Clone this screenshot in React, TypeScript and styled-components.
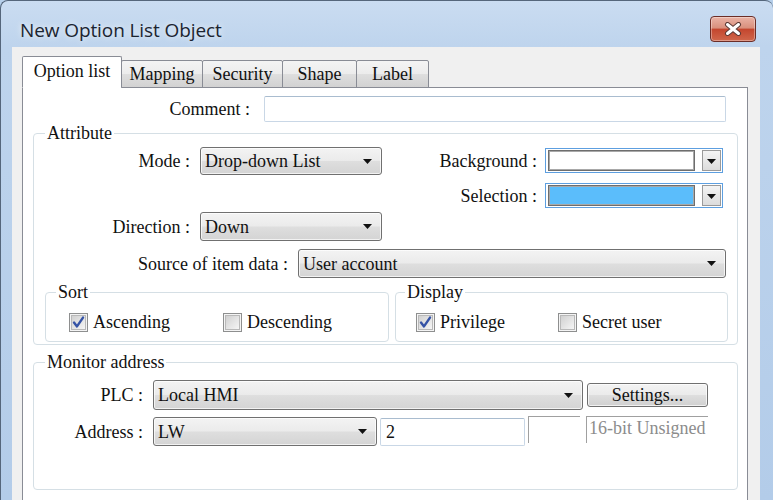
import React from 'react';
import styled, { createGlobalStyle } from 'styled-components';

const Global = createGlobalStyle`
  html, body { margin: 0; padding: 0; width: 773px; height: 500px; overflow: hidden; background: #b6cfea; }
  #root { width: 773px; height: 500px; }
`;

const SERIF = `"Liberation Serif", "Times New Roman", serif`;
const FS = 18;

const Window = styled.div`
  box-sizing: border-box;
  width: 773px;
  height: 500px;
  display: flex;
  flex-direction: column;
  background: linear-gradient(180deg, #cadcf1 0px, #bed4ed 46px, #b3cce9 100%);
  border-top: 1px solid #55667b;
  border-left: 1px solid #55667b;
  border-top-left-radius: 8px;
  border-top-right-radius: 8px;
  overflow: hidden;
`;

const TitleBar = styled.div`
  height: 46px;
  flex: none;
  display: flex;
  align-items: flex-start;
  padding-left: 19px;
`;

const Title = styled.div`
  margin-top: 16px;
  font-family: "Open Sans", "Noto Sans", sans-serif;
  font-size: 19px;
  line-height: 26px;
  color: #1b2430;
  text-shadow: 0 0 6px rgba(255, 255, 255, 0.9);
  letter-spacing: -0.1px;
`;

const CloseButton = styled.div`
  box-sizing: border-box;
  margin: 15px 17px 0 auto;
  width: 46px;
  height: 26px;
  border: 1px solid #6b2d27;
  border-radius: 4px;
  background: linear-gradient(180deg, #eab3a6 0%, #d9907d 45%, #c4472f 52%, #d0674c 100%);
  box-shadow: inset 0 0 0 1px rgba(255, 255, 255, 0.35);
  display: flex;
  align-items: center;
  justify-content: center;
`;

const Body = styled.div`
  flex: 1;
  display: flex;
  flex-direction: column;
  margin: 0 13px 0 11px;
  padding: 10px 12px 0 10px;
  background: #f0f0f0;
  min-height: 0;
`;

const TabStrip = styled.div`
  display: flex;
  align-items: flex-end;
  height: 31px;
  flex: none;
  margin-bottom: -1px;
  position: relative;
  z-index: 1;
`;

const Tab = styled.div<{ $active?: boolean; $w: number }>`
  box-sizing: border-box;
  width: ${(p) => p.$w}px;
  height: ${(p) => (p.$active ? 32 : 28)}px;
  margin-left: -1px;
  &:first-child { margin-left: 0; }
  border: 1px solid #898c95;
  border-bottom: ${(p) => (p.$active ? '1px solid #ffffff' : '1px solid #898c95')};
  border-radius: 2px 2px 0 0;
  background: ${(p) =>
    p.$active ? '#ffffff' : 'linear-gradient(180deg, #f4f4f4 0%, #ececec 50%, #dedede 52%, #d2d2d2 100%)'};
  display: flex;
  align-items: center;
  justify-content: center;
  padding-bottom: ${(p) => (p.$active ? 3 : 0)}px;
  font-family: ${SERIF};
  font-size: ${FS}px;
  line-height: 20px;
  color: #111;
  white-space: nowrap;
`;

const Panel = styled.div`
  flex: 1;
  box-sizing: border-box;
  background: #ffffff;
  border: 1px solid #898c95;
  border-bottom: none;
  padding: 0 9px 0 0;
  display: flex;
  flex-direction: column;
`;

const Row = styled.div<{ $mt?: number; $ml?: number }>`
  display: flex;
  align-items: center;
  margin-top: ${(p) => p.$mt ?? 0}px;
  margin-left: ${(p) => p.$ml ?? 0}px;
`;

const Label = styled.div<{ $w: number }>`
  width: ${(p) => p.$w}px;
  flex: none;
  text-align: right;
  white-space: nowrap;
  font-family: ${SERIF};
  font-size: ${FS}px;
  line-height: 20px;
  color: #111;
`;

const TextBox = styled.div<{ $w: number; $h: number; $ml: number }>`
  box-sizing: border-box;
  width: ${(p) => p.$w}px;
  height: ${(p) => p.$h}px;
  margin-left: ${(p) => p.$ml}px;
  flex: none;
  border: 1px solid #c9d7e6;
  border-top-color: #a9bccf;
  border-radius: 2px;
  background: #fff;
  padding: 0 5px;
  display: flex;
  align-items: center;
  font-family: ${SERIF};
  font-size: ${FS}px;
  line-height: 20px;
  color: #111;
`;

const Combo = styled.div<{ $w: number; $h: number; $ml: number }>`
  box-sizing: border-box;
  width: ${(p) => p.$w}px;
  height: ${(p) => p.$h}px;
  margin-left: ${(p) => p.$ml}px;
  flex: none;
  border: 1px solid #707070;
  border-radius: 3px;
  background: linear-gradient(180deg, #f3f3f3 0%, #ebebeb 48%, #dedede 52%, #d4d4d4 100%);
  box-shadow: inset 0 0 0 1px rgba(255, 255, 255, 0.7);
  display: flex;
  align-items: center;
  justify-content: space-between;
  padding: 0 9px 0 4px;
  font-family: ${SERIF};
  font-size: ${FS}px;
  line-height: 20px;
  color: #111;
  white-space: nowrap;
`;

const Button = styled.div<{ $w: number; $h: number; $ml: number }>`
  box-sizing: border-box;
  width: ${(p) => p.$w}px;
  height: ${(p) => p.$h}px;
  margin-left: ${(p) => p.$ml}px;
  flex: none;
  border: 1px solid #707070;
  border-radius: 3px;
  background: linear-gradient(180deg, #f3f3f3 0%, #ebebeb 48%, #dedede 52%, #d0d0d0 100%);
  box-shadow: inset 0 0 0 1px rgba(255, 255, 255, 0.7);
  display: flex;
  align-items: center;
  justify-content: center;
  font-family: ${SERIF};
  font-size: ${FS}px;
  line-height: 20px;
  color: #111;
`;

const ColorPicker = styled.div<{ $ml: number }>`
  box-sizing: border-box;
  width: 178px;
  height: 25px;
  margin-left: ${(p) => p.$ml}px;
  flex: none;
  border: 1px solid #5d9fe0;
  display: flex;
  align-items: center;
  padding: 0 1px 0 2px;
  background: #fff;
`;

const Swatch = styled.div<{ $color: string }>`
  box-sizing: border-box;
  width: 147px;
  height: 21px;
  border: 1px solid #6e6e6e;
  box-shadow: inset 0 0 0 1px #a8a8a8;
  background: ${(p) => p.$color};
`;

const DropBtn = styled.div`
  box-sizing: border-box;
  margin-left: auto;
  width: 19px;
  height: 21px;
  border: 1px solid #9a9a9a;
  background: linear-gradient(180deg, #f4f4f4, #dcdcdc);
  display: flex;
  align-items: center;
  justify-content: center;
  padding-top: 2px;
`;

const GroupBox = styled.fieldset<{ $mt: number; $ml: number; $w?: number; $pt: number; $pb: number }>`
  box-sizing: border-box;
  margin: ${(p) => p.$mt}px 0 0 ${(p) => p.$ml}px;
  ${(p) => (p.$w ? `width: ${p.$w}px; flex: none;` : '')}
  min-width: 0;
  border: 1px solid #d5dfe5;
  border-radius: 4px;
  padding: ${(p) => p.$pt}px 0 ${(p) => p.$pb}px 0;
`;

const Legend = styled.legend<{ $ml: number }>`
  margin-left: ${(p) => p.$ml}px;
  padding: 0 2px;
  font-family: ${SERIF};
  font-size: ${FS}px;
  line-height: 20px;
  color: #111;
`;

const Columns = styled.div`
  display: flex;
  align-items: flex-start;
`;

const Column = styled.div`
  display: flex;
  flex-direction: column;
`;

const SubGroups = styled.div`
  display: flex;
  margin: 4px 0 0 11px;
  gap: 6px;
`;

const CheckItem = styled.div<{ $w?: number }>`
  display: flex;
  align-items: center;
  gap: 5px;
  ${(p) => (p.$w ? `width: ${p.$w}px;` : '')}
  flex: none;
  font-family: ${SERIF};
  font-size: ${FS}px;
  line-height: 20px;
  color: #111;
  white-space: nowrap;
`;

const ReadOnlyField = styled.div<{ $w: number; $ml: number }>`
  box-sizing: border-box;
  width: ${(p) => p.$w}px;
  height: 27px;
  margin-left: ${(p) => p.$ml}px;
  flex: none;
  border-top: 1px solid #a0a0a0;
  border-left: 1px solid #a0a0a0;
  padding: 0 0 0 2px;
  font-family: ${SERIF};
  font-size: ${FS}px;
  line-height: 22px;
  color: #8c8c8c;
  white-space: nowrap;
  overflow: hidden;
  align-self: flex-start;
  margin-top: -1px;
`;

const Arrow = () => (
  <svg width="9" height="5" viewBox="0 0 9 5">
    <polygon points="0,0 9,0 4.5,5" fill="#111" />
  </svg>
);

const CloseIcon = () => (
  <svg width="18" height="14" viewBox="0 0 18 14">
    <path d="M3.5 2.5 L14.5 11.5 M14.5 2.5 L3.5 11.5" stroke="#5a3a36" strokeWidth="5" strokeLinecap="round" />
    <path d="M3.5 2.5 L14.5 11.5 M14.5 2.5 L3.5 11.5" stroke="#ffffff" strokeWidth="3" strokeLinecap="round" />
  </svg>
);

const CheckBox = ({ checked }: { checked?: boolean }) => (
  <svg width="19" height="19" viewBox="0 0 19 19">
    <defs>
      <linearGradient id="cbg" x1="0" y1="0" x2="1" y2="1">
        <stop offset="0" stopColor="#cfcfcf" />
        <stop offset="1" stopColor="#f7f7f7" />
      </linearGradient>
    </defs>
    <rect x="0.5" y="0.5" width="18" height="18" fill="#f4f4f4" stroke="#8e8f8f" />
    <rect x="2.5" y="2.5" width="14" height="14" fill="url(#cbg)" stroke="#b9b9b9" />
    {checked && (
      <path d="M5 9.6 L8 13.4 L14 4.6" fill="none" stroke="#3553a6" strokeWidth="2.4" strokeLinecap="round" strokeLinejoin="round" />
    )}
  </svg>
);

const ComboBox = ({ w, h, ml, value }: { w: number; h: number; ml: number; value: string }) => (
  <Combo $w={w} $h={h} $ml={ml}>
    <span>{value}</span>
    <Arrow />
  </Combo>
);

export default function App() {
  return (
    <>
      <Global />
      <Window>
        <TitleBar>
          <Title>New Option List Object</Title>
          <CloseButton>
            <CloseIcon />
          </CloseButton>
        </TitleBar>
        <Body>
          <TabStrip>
            <Tab $active $w={100}>Option list</Tab>
            <Tab $w={82}>Mapping</Tab>
            <Tab $w={81}>Security</Tab>
            <Tab $w={75}>Shape</Tab>
            <Tab $w={73}>Label</Tab>
          </TabStrip>
          <Panel>
            <Row $mt={8}>
              <Label $w={227}>Comment :</Label>
              <TextBox $w={462} $h={26} $ml={14} />
            </Row>

            <GroupBox $mt={1} $ml={10} $pt={4} $pb={2}>
              <Legend $ml={11}>Attribute</Legend>
              <Columns>
                <Column>
                  <Row>
                    <Label $w={156}>Mode :</Label>
                    <ComboBox w={182} h={28} ml={10} value="Drop-down List" />
                  </Row>
                  <Row $mt={37}>
                    <Label $w={156}>Direction :</Label>
                    <ComboBox w={182} h={29} ml={10} value="Down" />
                  </Row>
                </Column>
                <Column>
                  <Row $mt={1}>
                    <Label $w={155}>Background :</Label>
                    <ColorPicker $ml={8}>
                      <Swatch $color="#ffffff" />
                      <DropBtn>
                        <Arrow />
                      </DropBtn>
                    </ColorPicker>
                  </Row>
                  <Row $mt={10}>
                    <Label $w={155}>Selection :</Label>
                    <ColorPicker $ml={8}>
                      <Swatch $color="#5bbdfb" />
                      <DropBtn>
                        <Arrow />
                      </DropBtn>
                    </ColorPicker>
                  </Row>
                </Column>
              </Columns>
              <Row $mt={8}>
                <Label $w={254}>Source of item data :</Label>
                <ComboBox w={428} h={29} ml={10} value="User account" />
              </Row>
              <SubGroups>
                <GroupBox $mt={0} $ml={0} $w={344} $pt={10} $pb={9}>
                  <Legend $ml={10}>Sort</Legend>
                  <Row $ml={23}>
                    <CheckItem $w={154}>
                      <CheckBox checked />
                      Ascending
                    </CheckItem>
                    <CheckItem>
                      <CheckBox />
                      Descending
                    </CheckItem>
                  </Row>
                </GroupBox>
                <GroupBox $mt={0} $ml={0} $w={333} $pt={10} $pb={9}>
                  <Legend $ml={9}>Display</Legend>
                  <Row $ml={20}>
                    <CheckItem $w={142}>
                      <CheckBox checked />
                      Privilege
                    </CheckItem>
                    <CheckItem>
                      <CheckBox />
                      Secret user
                    </CheckItem>
                  </Row>
                </GroupBox>
              </SubGroups>
            </GroupBox>

            <GroupBox $mt={7} $ml={10} $pt={8} $pb={43}>
              <Legend $ml={11}>Monitor address</Legend>
              <Row>
                <Label $w={109}>PLC :</Label>
                <ComboBox w={430} h={30} ml={10} value="Local HMI" />
                <Button $w={121} $h={24} $ml={4}>Settings...</Button>
              </Row>
              <Row $mt={7}>
                <Label $w={109}>Address :</Label>
                <ComboBox w={224} h={29} ml={10} value="LW" />
                <TextBox $w={145} $h={28} $ml={3}>2</TextBox>
                <ReadOnlyField $w={52} $ml={3} />
                <ReadOnlyField $w={122} $ml={6}>16-bit Unsigned</ReadOnlyField>
              </Row>
            </GroupBox>
          </Panel>
        </Body>
      </Window>
    </>
  );
}
